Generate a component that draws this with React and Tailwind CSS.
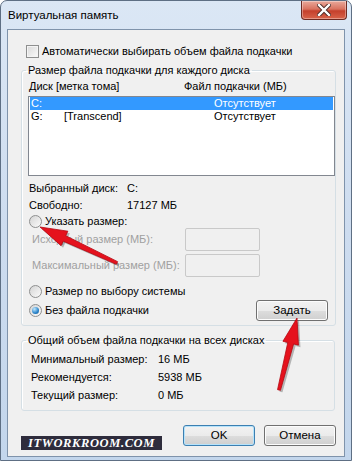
import React from 'react';

const Radio = ({ checked }) => (
    <span className="inline-flex h-[13px] w-[13px] shrink-0 items-center justify-center rounded-full border border-[#8e8f8f] bg-linear-to-br from-[#d4d4d4] to-[#fbfbfb]">
        {checked && <span className="h-[7px] w-[7px] rounded-full bg-[radial-gradient(circle_at_35%_30%,#bfe8ff,#2a83c9_60%,#15548c)]" />}
    </span>
);

const WinButton = ({ children, isDefault }) => (
    <button
        type="button"
        className={`flex h-[21px] w-[72px] items-center justify-center rounded-[3px] border text-[11.5px] text-black ${isDefault ? 'border-[#3c7fb1] shadow-[inset_0_0_0_1px_#b6e3fb]' : 'border-[#707070] shadow-[inset_0_0_0_1px_#fcfcfc]'} bg-[linear-gradient(#f2f2f2_0%,#ebebeb_50%,#dddddd_51%,#cfcfcf_100%)]`}
    >
        {children}
    </button>
);

const Arrow = ({ tail, tip, head = 26, half = 8 }) => {
    const dx = tip[0] - tail[0];
    const dy = tip[1] - tail[1];
    const len = Math.hypot(dx, dy);
    const ux = dx / len, uy = dy / len;
    const nx = -uy, ny = ux;
    const bx = tip[0] - ux * head, by = tip[1] - uy * head;
    const shaft = [
        [tail[0] + nx * 1.5, tail[1] + ny * 1.5],
        [bx + nx * 3, by + ny * 3],
        [bx + nx * half, by + ny * half],
        tip,
        [bx - nx * half, by - ny * half],
        [bx - nx * 3, by - ny * 3],
        [tail[0] - nx * 1.5, tail[1] - ny * 1.5],
    ];
    const pts = shaft.map(p => p.join(',')).join(' ');
    const shadow = shaft.map(p => `${p[0] + 2},${p[1] + 2}`).join(' ');
    return (
        <>
            <polygon points={shadow} fill="#000" opacity="0.25" />
            <polygon points={pts} fill="#e5121d" stroke="#b40812" strokeWidth="0.8" strokeLinejoin="round" />
        </>
    );
};

export default function App() {
    return (
        <div className="relative h-[462px] w-[354px] overflow-hidden bg-white font-[family-name:'Liberation_Sans',sans-serif] text-[11px] leading-none whitespace-nowrap text-black">
            <div className="flex h-[461px] w-[352px] flex-col rounded-t-[7px] border border-[#5e6f84] bg-linear-to-b from-[#dbe7f5] via-[#cddcef] to-[#c3d6ec]">
                {/* title bar */}
                <div className="flex h-[28px] items-start justify-between">
                    <span className="mt-[9px] ml-[7px] text-[11.5px] text-black">Виртуальная память</span>
                    <div className="mr-[4px] flex h-[19px] w-[46px] items-center justify-center rounded-b-[4px] border border-t-0 border-[#6d2a22] bg-[linear-gradient(#e9a99b_0%,#d9725f_45%,#c4402c_55%,#d8634a_100%)] shadow-[inset_0_0_0_1px_rgba(255,255,255,0.35)]">
                        <svg width="14" height="12" viewBox="0 0 14 12">
                            <path d="M2 1 L12 11 M12 1 L2 11" stroke="#4a2a26" strokeWidth="4.2" strokeLinecap="square" />
                            <path d="M2 1 L12 11 M12 1 L2 11" stroke="#ffffff" strokeWidth="2.4" strokeLinecap="square" />
                        </svg>
                    </div>
                </div>

                {/* client area */}
                <div className="mx-[6px] flex h-[428px] flex-col border border-[#7f93ab] bg-[#f0f0f0]">
                    <div className="mt-[15px] flex h-[13px] items-center pl-[18px]">
                        <span className="h-[13px] w-[13px] border border-[#8e8f8f] bg-linear-to-br from-[#d9d9d9] to-[#fafafa] shadow-[inset_0_0_0_1px_#f4f4f4]" />
                        <span className="ml-[3px]">Автоматически выбирать объем файла подкачки</span>
                    </div>

                    <fieldset className="mt-[5px] ml-[13px] w-[314px] rounded-[3px] border border-[#d5dfe5] pb-[4px] shadow-[inset_1px_1px_0_#fff]">
                        <legend className="ml-[4px] px-[2px] leading-[15px]">Размер файла подкачки для каждого диска</legend>
                        <div className="mt-[1px] flex h-[14px] items-center pl-[7px]">
                            <span className="w-[155px]">Диск [метка тома]</span>
                            <span>Файл подкачки (МБ)</span>
                        </div>
                        <div className="relative mt-[3px] ml-[6px] h-[80px] w-[307px] border border-[#828790] bg-white">
                            <div className="mx-[1px] flex h-[13px] items-center bg-[#3399ff] pl-[1px] text-white">
                                <span className="w-[183px]">C:</span>
                                <span>Отсутствует</span>
                            </div>
                            <div className="mx-[1px] flex h-[13px] items-center pl-[1px]">
                                <span className="w-[33px]">G:</span>
                                <span className="w-[150px]">[Transcend]</span>
                                <span>Отсутствует</span>
                            </div>
                        </div>
                        <div className="mt-[4px] flex h-[17px] items-center pl-[7px]">
                            <span className="w-[98px]">Выбранный диск:</span>
                            <span>C:</span>
                        </div>
                        <div className="flex h-[17px] items-center pl-[7px]">
                            <span className="w-[98px]">Свободно:</span>
                            <span>17127 МБ</span>
                        </div>
                        <div className="flex h-[14px] items-center pl-[7px]">
                            <Radio />
                            <span className="ml-[3px]">Указать размер:</span>
                        </div>
                        <div className="flex h-[23px] items-center pl-[10px] text-[#a0a0a0]">
                            <span className="w-[153px]">Исходный размер (МБ):</span>
                            <span className="h-[23px] w-[75px] rounded-[2px] border border-[#c9c9c9] bg-[#f0f0f0]" />
                        </div>
                        <div className="mt-[3px] flex h-[23px] items-center pl-[10px] text-[#a0a0a0]">
                            <span className="w-[153px]">Максимальный размер (МБ):</span>
                            <span className="h-[23px] w-[75px] rounded-[2px] border border-[#c9c9c9] bg-[#f0f0f0]" />
                        </div>
                        <div className="mt-[6px] flex h-[17px] items-center pl-[7px]">
                            <Radio />
                            <span className="ml-[3px]">Размер по выбору системы</span>
                        </div>
                        <div className="flex h-[21px] items-center justify-between pr-[7px] pl-[7px]">
                            <div className="flex items-center">
                                <Radio checked />
                                <span className="ml-[3px]">Без файла подкачки</span>
                            </div>
                            <WinButton>Задать</WinButton>
                        </div>
                    </fieldset>

                    <fieldset className="mt-[7px] ml-[13px] w-[314px] rounded-[3px] border border-[#d5dfe5] pb-[6px] shadow-[inset_1px_1px_0_#fff]">
                        <legend className="ml-[4px] px-[2px] leading-[15px]">Общий объем файла подкачки на всех дисках</legend>
                        <div className="mt-[2px] flex h-[18px] items-center pl-[9px]">
                            <span className="w-[127px]">Минимальный размер:</span>
                            <span>16 МБ</span>
                        </div>
                        <div className="flex h-[18px] items-center pl-[9px]">
                            <span className="w-[127px]">Рекомендуется:</span>
                            <span>5938 МБ</span>
                        </div>
                        <div className="flex h-[18px] items-center pl-[9px]">
                            <span className="w-[127px]">Текущий размер:</span>
                            <span>0 МБ</span>
                        </div>
                    </fieldset>

                    <div className="mt-[14px] flex items-start justify-between pr-[8px] pl-[13px]">
                        <span className="mt-[11px] flex h-[14px] w-[141px] items-center justify-center bg-[#2e2c3c] font-[family-name:'Liberation_Serif',serif] text-[12.5px] font-bold italic tracking-[0.6px] text-white">
                            ITWORKROOM.COM
                        </span>
                        <div className="flex gap-[9px]">
                            <WinButton isDefault>OK</WinButton>
                            <WinButton>Отмена</WinButton>
                        </div>
                    </div>
                </div>
            </div>

            <svg className="pointer-events-none absolute top-0 left-0" width="354" height="462" viewBox="0 0 354 462">
                <Arrow tail={[117, 263]} tip={[40, 227]} head={27} half={8} />
                <Arrow tail={[279, 390]} tip={[297, 318]} head={26} half={8} />
            </svg>
        </div>
    );
}
